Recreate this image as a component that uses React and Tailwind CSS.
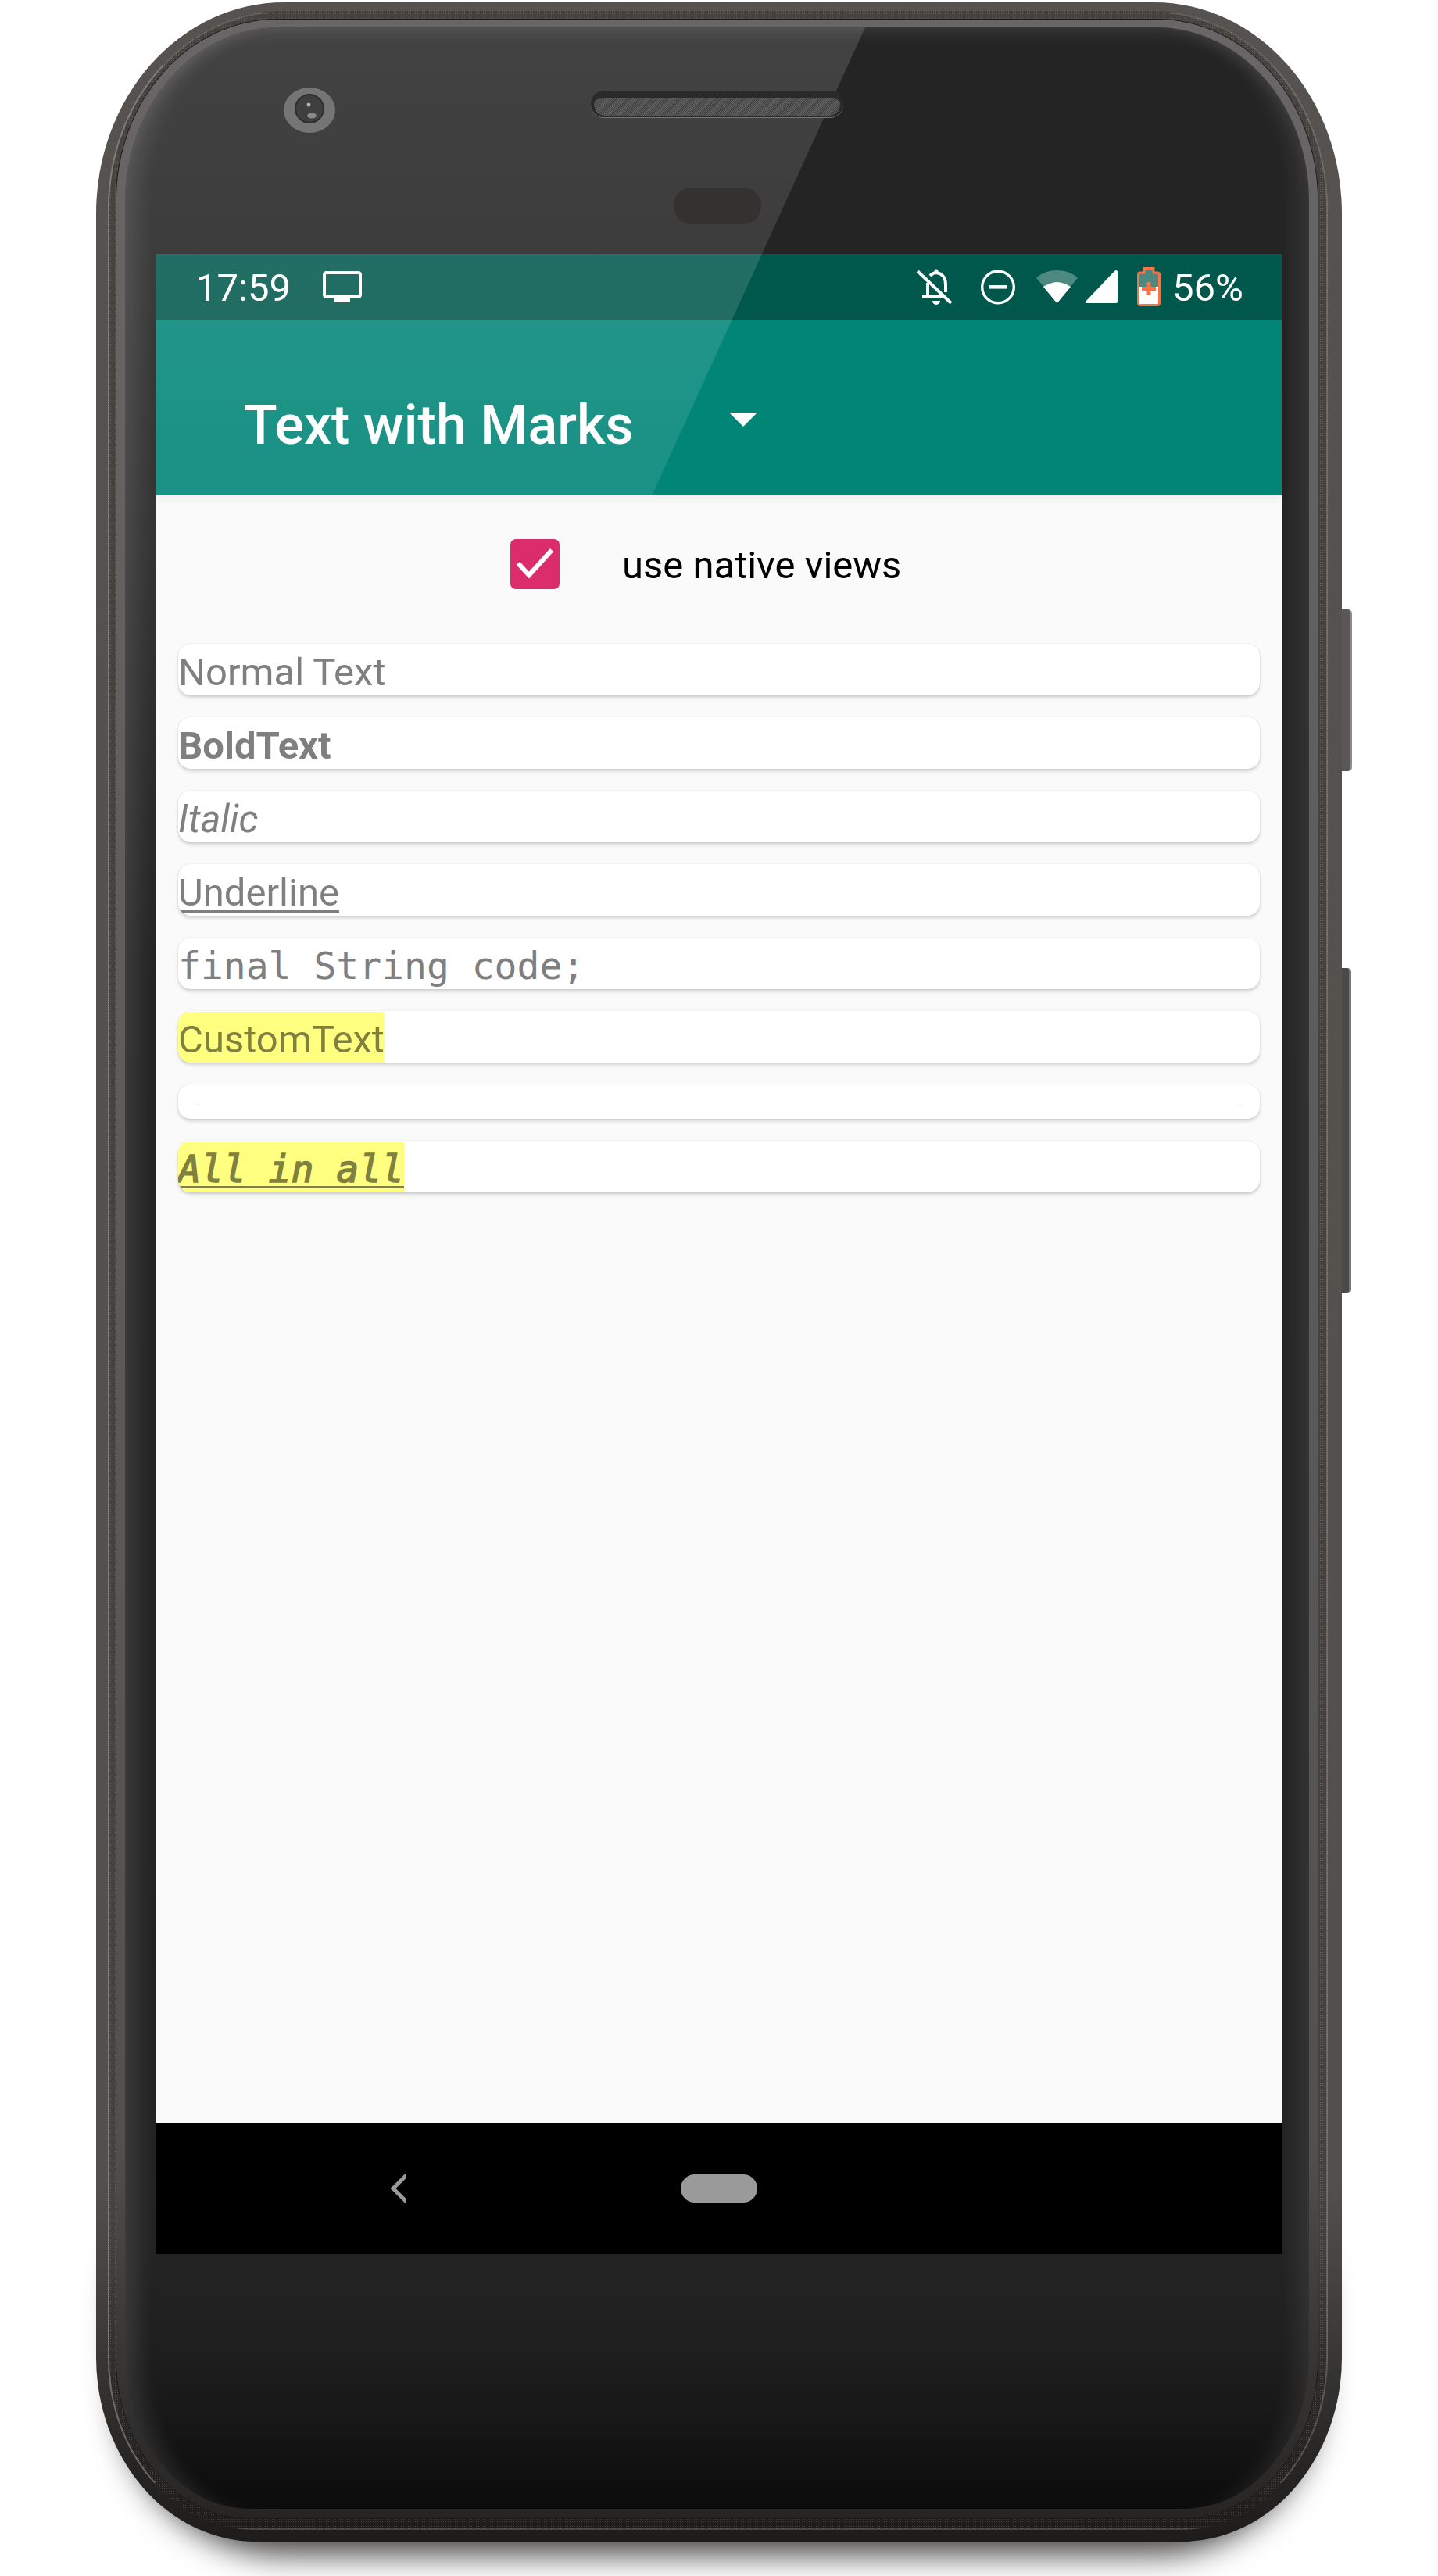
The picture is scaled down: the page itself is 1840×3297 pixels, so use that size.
import { Fragment } from "react";

const rows = [
  { text: "Normal Text", className: "leading-[72px]" },
  { text: "BoldText", className: "font-bold leading-[72px]" },
  { text: "Italic", className: "italic leading-[72px]" },
  { text: "Underline", className: "leading-[72px] underline decoration-[3px] underline-offset-[6px]" },
  { text: "final String code;", className: "font-['DejaVu_Sans_Mono',monospace] text-[48px] leading-[70px]" },
  { text: "CustomText", className: "bg-[#ffff80] leading-[72px] text-[#808040]" },
];

function Card({ children, small }) {
  return (
    <div
      className={`mx-[28px] overflow-hidden rounded-[16px] bg-white shadow-[0_3px_4px_rgba(0,0,0,0.16),0_0_2px_rgba(0,0,0,0.1)] ${
        small ? "h-[44px]" : "h-[66px]"
      }`}
    >
      {children}
    </div>
  );
}

function BellOff() {
  return (
    <svg width="70" height="65" viewBox="0 0 70 65" fill="none" stroke="white" strokeWidth="4">
      <path d="M14 12 L57 53" />
      <path d="M20 44 H46" />
      <path d="M27 45 V27" />
      <path d="M30 18 C33 15 36 14 38 14 C46 15 50 21 50 29 V39" />
      <circle cx="38" cy="12" r="2.5" fill="white" stroke="none" />
      <path d="M33 50 H43 A5 5 0 0 1 33 50 Z" fill="white" stroke="none" />
    </svg>
  );
}

function StatusBar() {
  return (
    <div className="flex h-[84px] items-center bg-[#00574b] pl-[50px] pr-[49px] text-white">
      <span className="w-[163px] pt-[3px] text-[49px] leading-none">17:59</span>
      <svg width="50" height="40" viewBox="0 0 50 40" fill="none">
        <rect x="2" y="2" width="46" height="31" rx="2.5" stroke="white" strokeWidth="4" />
        <rect x="15" y="35" width="20" height="5" fill="white" />
      </svg>
      <div className="ml-auto flex items-center">
        <BellOff />
        <svg className="ml-[25px]" width="44" height="45" viewBox="0 0 44 45" fill="none">
          <circle cx="22" cy="22.5" r="20.3" stroke="white" strokeWidth="3.4" />
          <rect x="10.5" y="20" width="23" height="4.6" fill="white" />
        </svg>
        <svg className="ml-[27px]" width="53" height="42" viewBox="0 0 53 42">
          <path
            d="M26.5 0 C36 0 45 3 53 9.5 L27.5 41 Q26.5 42 25.5 41 L0 9.5 C8 3 17 0 26.5 0 Z"
            fill="white"
            fillOpacity="0.3"
          />
          <path
            d="M26.5 15 C32 15 38 17.5 44 21 L27.5 41 Q26.5 42 25.5 41 L9 21 C15 17.5 21 15 26.5 15 Z"
            fill="white"
          />
        </svg>
        <svg className="ml-[9px]" width="42" height="42" viewBox="0 0 42 42">
          <path d="M40 0 Q42 0 42 2 V40 Q42 42 40 42 H2 Q0 42 1 40 L38 1 Q39 0 40 0 Z" fill="white" />
        </svg>
        <svg className="ml-[25px]" width="30" height="50" viewBox="0 0 30 50">
          <path d="M9 8 V2 H21 V8 H27 V47 Q27 48 26 48 H4 Q3 48 3 47 V8 Z" fill="white" fillOpacity="0.3" />
          <path d="M3 25 H27 V47 H3 Z" fill="white" />
          <path
            d="M9 7 V1.5 H21 V7 H26 Q28.5 7 28.5 9.5 V46 Q28.5 48.5 26 48.5 H4 Q1.5 48.5 1.5 46 V9.5 Q1.5 7 4 7 Z"
            fill="none"
            stroke="#ff7043"
            strokeWidth="3"
          />
          <path d="M12.5 19 H17.5 V25 H24 V30 H17.5 V36 H12.5 V30 H6 V25 H12.5 Z" fill="#ff7043" />
        </svg>
        <span className="ml-[15px] pt-[3px] text-[49px] leading-none">56%</span>
      </div>
    </div>
  );
}

function AppBar() {
  return (
    <div className="flex h-[224px] items-center bg-[#008577] pl-[112px] text-white">
      <span className="w-[621px] pt-[46px] text-[70px] font-medium leading-none">Text with Marks</span>
      <svg className="mt-[32px]" width="36" height="18" viewBox="0 0 36 18">
        <path d="M0 0 H36 L18 18 Z" fill="white" />
      </svg>
    </div>
  );
}

function Screen() {
  return (
    <div className="relative z-10 flex h-[2560px] w-[1440px] flex-col bg-[#fafafa]">
      <div className="relative z-10 shadow-[0_6px_10px_rgba(0,0,0,0.05)]">
        <StatusBar />
        <AppBar />
        {/* the glass reflection runs over the bars */}
        <div className="pointer-events-none absolute left-0 top-0 h-[308px] w-[775px] bg-gradient-to-b from-white/14 to-white/10 [clip-path:polygon(0_0,100%_0,81.9%_100%,0_100%)]" />
      </div>

      <div className="flex-1">
        <div className="flex h-[178px] items-center pl-[453px]">
          <div className="h-[64px] w-[63px] rounded-[7px] bg-[#dc2d6b]">
            <svg width="63" height="64" viewBox="0 0 63 64" fill="none">
              <path d="M10 31 L24 46 L53 14" stroke="white" strokeWidth="6" />
            </svg>
          </div>
          <span className="ml-[80px] pt-[2px] text-[49px] leading-none text-black">use native views</span>
        </div>

        <div className="mt-[13px] flex flex-col gap-[28px] text-[49px] text-[#7f7f7f]">
          {rows.map((row) => (
            <Fragment key={row.text}>
              <Card>
                <span className={`inline-block h-[66px] ${row.className}`}>{row.text}</span>
              </Card>
            </Fragment>
          ))}
          <Card small>
            <div className="mx-[21px] mt-[22px] h-px bg-black" />
          </Card>
          <Card>
            <span className="inline-block h-[66px] bg-[#ffff80] font-['DejaVu_Sans_Mono',monospace] text-[48px] italic leading-[69px] text-[#808040] underline decoration-[3px] underline-offset-[5px] [-webkit-text-stroke:1.5px_#808040]">
              All in all
            </span>
          </Card>
        </div>
      </div>

      <div className="flex h-[168px] shrink-0 items-center bg-black pl-[300px]">
        <svg width="20" height="36" viewBox="0 0 20 36" fill="none">
          <path d="M20 1 L3 18 L20 35" stroke="#9a9a9a" strokeWidth="5" />
        </svg>
        <div className="ml-[351px] h-[36px] w-[98px] rounded-[18px] bg-[#9a9a9a]" />
      </div>
    </div>
  );
}

function Camera() {
  return (
    <svg width="66" height="58" viewBox="0 0 66 58">
      <ellipse cx="33" cy="29" rx="33" ry="29" fill="#757575" />
      <circle cx="33" cy="27" r="18" fill="#3f3f3f" stroke="#2e2e2e" strokeWidth="2" />
      <circle cx="32" cy="22" r="2.5" fill="#b5b5b5" />
      <ellipse cx="36" cy="36" rx="6" ry="3.5" fill="#8a8a8a" />
    </svg>
  );
}

export default function App() {
  return (
    <div className="isolate h-[3297px] w-[1840px] overflow-hidden bg-white pl-[123px] pt-[3px] font-[Roboto,sans-serif]">
      <div className="relative h-[3250px] w-[1594px]">
        {/* soft shadow under the lower part of the phone */}
        <div className="absolute inset-x-[30px] bottom-[8px] -z-10 h-[360px] rounded-b-[210px] shadow-[0_24px_40px_rgba(0,0,0,0.75)]" />

        {/* power and volume keys */}
        <div className="absolute left-[1594px] top-[777px] -z-10 h-[207px] w-[13px] rounded-r-[5px] border-r-[3px] border-[#8d8d90] bg-[#5a5856]" />
        <div className="absolute left-[1594px] top-[1236px] -z-10 h-[416px] w-[12px] rounded-r-[5px] border-r-[3px] border-[#77777a] bg-[#4b4a48]" />

        {/* metal frame */}
        <div className="h-full rounded-[240px_240px_205px_205px/270px_270px_236px_236px] bg-[linear-gradient(180deg,#56524f_0%,#524f4c_86%,#3c3a37_92%,#272523_97%,#1e1c1a_100%)] pb-[15px] pl-[15px] pr-[18px] pt-[11px]">
          {/* textured groove */}
          <div className="h-full rounded-[224px_224px_188px_188px/252px_252px_220px_220px] border-2 border-b-transparent border-l-white/30 border-r-white/20 border-t-white/15 bg-[radial-gradient(rgba(255,255,255,0.16)_1px,transparent_1px),linear-gradient(180deg,#45423f_0%,#45423f_88%,#2c2a28_95%,#1f1d1b_100%)] bg-[length:3px_3px,100%_100%] pb-[13px] pl-[9px] pr-[11px] pt-[9px]">
            {/* light edge of the glass */}
            <div className="h-full rounded-[206px_206px_172px_172px/232px_232px_205px_205px] bg-[linear-gradient(180deg,#686666_0%,#5a5856_60%,#524f4c_85%,#3a3836_93%,#272524_100%)] pb-[12px] pl-[11px] pr-[11px] pt-[10px] shadow-[0_0_0_1px_#1d1b19]">
              <div className="relative h-full overflow-hidden rounded-[195px_195px_160px_160px/222px_222px_195px_195px] bg-[linear-gradient(180deg,#252424_0%,#242323_90%,#1f1f1f_93.5%,#171717_96.5%,#0b0b0b_100%)] pl-[40px] pr-[35px] shadow-[inset_34px_0_26px_-18px_rgba(255,255,255,0.11),inset_-34px_0_26px_-18px_rgba(255,255,255,0.08),inset_0_16px_22px_-12px_rgba(255,255,255,0.12)]">
                <div className="pointer-events-none absolute left-0 top-0 h-[2079px] w-[947px] bg-gradient-to-b from-white/14 via-white/8 via-30% to-transparent to-60% [clip-path:polygon(0_0,100%_0,0_100%)]" />

                <div className="relative flex h-[290px] items-start pl-[163px]">
                  <div className="mt-[77px]">
                    <Camera />
                  </div>
                  <div className="ml-[327px] mt-[81px] flex flex-col items-center">
                    <div className="h-[34px] w-[323px] rounded-[17px] border-x-[4px] border-b-[2px] border-t-[9px] border-[#2a2a2a] bg-[repeating-linear-gradient(135deg,#5e5e5e_0,#5e5e5e_1px,#454545_1px,#454545_2px)] shadow-[0_1px_0_#777777]" />
                    <div className="mt-[90px] h-[47px] w-[112px] rounded-[23px] bg-[#333230]" />
                  </div>
                </div>

                <Screen />
              </div>
            </div>
          </div>
        </div>
      </div>
    </div>
  );
}
